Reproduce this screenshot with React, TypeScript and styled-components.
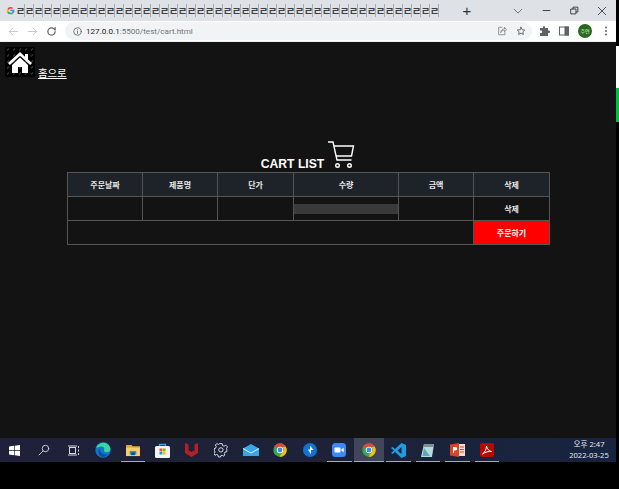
import React from "react";
import styled, { createGlobalStyle } from "styled-components";

const Global = createGlobalStyle`
  html, body { margin: 0; padding: 0; background: #000; overflow: hidden; }
  * { box-sizing: border-box; }
`;
const Screen = styled.div`
  position: relative; width: 619px; height: 489px; display: flex; flex-direction: column;
  background: #000; font-family: "Noto Sans CJK KR", "Noto Sans", sans-serif; overflow: hidden;
`;
const Window = styled.div`width: 616px; height: 42px; display: flex; flex-direction: column; flex: none;`;
const TabStrip = styled.div`
  height: 21px; background: #dee1e6; display: flex; align-items: center; padding-left: 6px; color: #3c4043;
`;
const Favicon = styled.svg`width: 9px; height: 9px; flex: none; margin-right: 1px;`;
const MiniTab = styled.span`
  width: 9px; height: 13px; flex: none; border-right: 1px solid #a9abb0;
  font-size: 10px; font-weight: 700; line-height: 13px; text-align: center; overflow: hidden;
`;
const NewTab = styled.span`
  margin-left: 23px; width: 10px; font: 400 15px/15px "Liberation Sans", sans-serif; color: #303235; text-align: center;
`;
const WinControls = styled.div`margin-left: auto; display: flex; align-items: center; gap: 0; padding-right: 0;`;
const WinBtn = styled.span`width: 28px; height: 16px; display: flex; align-items: center; justify-content: center;`;
const Toolbar = styled.div`
  height: 21px; background: #fff; display: flex; align-items: center; padding: 0 6px 0 8px; border-bottom: 1px solid #f1f1f1; color: #5f6368;
`;
const NavBtn = styled.span<{ $w?: number }>`
  width: ${(p) => p.$w ?? 19}px; display: flex; align-items: center; flex: none;
`;
const Omnibox = styled.div`
  margin-left: 5px; width: 467px; height: 18px; background: #f1f3f4; border-radius: 9px; display: flex; align-items: center; padding: 0 6px 0 8px; flex: none;
`;
const UrlText = styled.span`
  margin-left: 4px; font: 400 8.1px/12px "Roboto", "Liberation Sans", sans-serif; color: #70757a; letter-spacing: 0;
  b { font-weight: 400; color: #202124; }
`;
const OmniIcons = styled.span`margin-left: auto; display: flex; gap: 9px; align-items: center;`;
const ToolIcons = styled.span`margin-left: 8px; display: flex; align-items: center; gap: 9px;`;
const Avatar = styled.span`
  width: 14px; height: 14px; border-radius: 50%; background: #256b1c; color: #e6f2e0; font-size: 5px; line-height: 14px; text-align: center;
`;
const Page = styled.main`
  width: 616px; height: 396px; flex: none; background: #131313; color: #fff; display: flex; flex-direction: column; padding-top: 5px;
`;
const HomeLink = styled.a`
  display: flex; align-items: flex-end; padding-left: 5px; color: #fff; height: 32px;
  svg { align-self: flex-start; }
`;
const HomeLabel = styled.span`
  margin-left: 3px; font-size: 10.4px; line-height: 12px; text-decoration: underline;
`;
const Heading = styled.h1`
  margin: 62px 0 3px; height: 28px; display: flex; justify-content: center; align-items: flex-end; gap: 3px;
  font: 700 12.2px/16px "Liberation Sans", Arial, sans-serif; color: #fff;
`;
const HeadingText = styled.span`margin-bottom: -3px;`;
const Table = styled.table`
  margin-left: 67px; width: 482px; border-collapse: collapse; table-layout: fixed; color: #e8e8e8;
  font-size: 8px; font-weight: 700;
`;
const Head = styled.th`
  height: 24px; padding: 0; border: 1px solid #555; background: #1e232a; text-align: center; font-weight: 700;
`;
const Cell = styled.td`
  height: 24px; padding: 0; border: 1px solid #555; text-align: center;
`;
const QtyBar = styled.div`width: 100%; height: 10px; background: #3a3a3a;`;
const OrderCell = styled(Cell)`background: #ff0000; color: #fff;`;
const Taskbar = styled.footer`
  width: 616px; height: 24px; flex: none; background: linear-gradient(90deg, #1e2139 0%, #1d2238 55%, #172440 100%);
  display: flex; color: #e6e8ee;
`;
const TaskItem = styled.span<{ $running?: boolean; $active?: boolean }>`
  position: relative; width: 29.5px; height: 24px; flex: none; display: flex; align-items: center; justify-content: center;
  background: ${(p) => (p.$active ? "#41465a" : "transparent")};
  &::after {
    content: ""; display: ${(p) => (p.$running ? "block" : "none")};
    position: absolute; bottom: 0; left: ${(p) => (p.$active ? 0 : 2.5)}px; right: ${(p) => (p.$active ? 0 : 2.5)}px; height: 1px; background: #76b9ed;
  }
`;
const Clock = styled.div`
  margin-left: auto; width: 50px; padding: 1px 4px 0 0; text-align: center; font: 400 7.6px/11px "Noto Sans", "Noto Sans CJK KR", sans-serif; color: #e4e6ea;
`;
const ScrollMark = styled.div`
  position: absolute; left: 616px; top: 46px; width: 3px; height: 76px;
  background: linear-gradient(#fff 0 42px, #00c13c 42px);
`;

const GIcon = () => (
  <Favicon viewBox="0 0 24 24">
    <path d="M4 7a10 10 0 0 1 15-2l-3 3a6 6 0 0 0-9 3z" fill="#ea4335" />
    <path d="M3 17a11 11 0 0 1 0-10l4 3a6 6 0 0 0 0 4z" fill="#fbbc05" />
    <path d="M3 17l4-3a6 6 0 0 0 9 3l3 3a11 11 0 0 1-16-3z" fill="#34a853" />
    <path d="M12 10h10.500a11 11 0 0 1-3.500 10l-3-3a5 5 0 0 0 2-3h-6z" fill="#4285f4" />
  </Favicon>
);
const Ico = ({ children, w = 12, vb = "0 0 24 24", c = "currentColor", sw = 2 }: { children: React.ReactNode; w?: number; vb?: string; c?: string; sw?: number }) => (
  <svg width={w} height={w} viewBox={vb} fill="none" stroke={c} strokeWidth={sw} strokeLinecap="round" strokeLinejoin="round">{children}</svg>
);

const HomeIcon = () => (
  <svg width="30" height="30" viewBox="0 0 30 30">
    <rect width="30" height="30" fill="#000" />
    {[2, 8, 14, 20, 26].flatMap((x) => [2, 8, 14, 20, 26].map((y) => (
      <path key={`${x}-${y}`} d={`M${x} ${y + 1.500}l2 -2`} stroke="#3c3c3c" strokeWidth="1.100" />
    )))}
    <path d="M15 5L3 16l1.800 2L15 8.800 25.200 18l1.800-2-4-3.600V7h-3v2.700z" fill="#fff" />
    <path d="M15 10.500L7 18v8h6v-6h4v6h6v-8z" fill="#fff" />
  </svg>
);

const CartIcon = () => (
  <svg width="28" height="28" viewBox="0 0 28 28" fill="none" stroke="#fff" strokeWidth="1.400">
    <path d="M1 1h5l4 18h14.500" />
    <path d="M7 5h19.500l-2 10H9" />
    <circle cx="10.500" cy="24.500" r="1.800" />
    <circle cx="22.500" cy="24.500" r="1.800" />
  </svg>
);

const ChromeLogo = ({ s = 14 }: { s?: number }) => (
  <svg width={s} height={s} viewBox="0 0 24 24">
    <circle cx="12" cy="12" r="11.500" fill="#34a853" />
    <path d="M12 .5A11.500 11.500 0 0 1 22 6.500H12a5.500 5.500 0 0 0-5 3L2.500 5.500A11.500 11.500 0 0 1 12 .5z" fill="#ea4335" />
    <path d="M22 6.500A11.500 11.500 0 0 1 11 23.500l5.500-8A5.500 5.500 0 0 0 16 7z" fill="#fbbc05" />
    <circle cx="12" cy="12" r="5.500" fill="#fff" />
    <circle cx="12" cy="12" r="4.200" fill="#4285f4" />
  </svg>
);

const taskIcons: { key: string; running?: boolean; active?: boolean; icon: React.ReactNode }[] = [
  { key: "win", icon: <svg width="11" height="11" viewBox="0 0 11 11"><path d="M0 1.500l5-.7v4.300H0zM5.700.7L11 0v5.100H5.700zM0 5.800h5v4.400l-5-.7zM5.700 5.800H11V11l-5.300-.7z" fill="#fff" /></svg> },
  { key: "search", icon: <Ico w={12} c="#d5d7de" sw={1.800}><circle cx="15" cy="9" r="6.500" /><path d="M10 14l-8 8" /></Ico> },
  { key: "view", icon: <svg width="12" height="11" viewBox="0 0 12 11" fill="none" stroke="#d5d7de"><rect x="1.500" y="2.500" width="6" height="6" /><path d="M0 1h9M0 10h9M10.500 1v2M10.500 4.500v2M10.500 8v2" /></svg> },
  { key: "edge", icon: <svg width="16" height="16" viewBox="0 0 24 24"><circle cx="12" cy="12" r="11.500" fill="#0f78c8" /><path d="M2 8C5 1 15-1 20 4c4 4 4 10 0 11-4 1-8 0-6-4 1-2-2-5-6-4-3 .8-5 2-6 1z" fill="#38d6a0" /><path d="M10 22c-5-2-6-9-3-12 0 5 4 10 12 8-2 3-5 5-9 4z" fill="#0a4f9c" /></svg> },
  { key: "files", running: true, icon: <svg width="14" height="13" viewBox="0 0 15 14"><path d="M0 1h6l1 1.500h8V13H0z" fill="#e0a93a" /><rect y="4" width="15" height="9" fill="#f3cf6e" /><rect x="4" y="7.500" width="7" height="4" fill="#2b90d9" /><rect x="5.500" y="9" width="4" height="3" fill="#16507f" /></svg> },
  { key: "store", icon: <svg width="15" height="15" viewBox="0 0 15 15"><path d="M4.500 3V1.500h6V3" fill="none" stroke="#38a9e4" strokeWidth="1.300" /><rect y="3" width="15" height="12" rx="1.500" fill="#f3f3f3" /><rect x="4.500" y="5.500" width="2.800" height="2.800" fill="#f25022" /><rect x="7.700" y="5.500" width="2.800" height="2.800" fill="#7fba00" /><rect x="4.500" y="8.700" width="2.800" height="2.800" fill="#00a4ef" /><rect x="7.700" y="8.700" width="2.800" height="2.800" fill="#ffb900" /></svg> },
  { key: "mcafee", icon: <svg width="13" height="14" viewBox="0 0 13 14"><path d="M0 0l3.500 1.500v6L6.500 9l3-1.500v-6L13 0v10l-6.500 4L0 10z" fill="#b3202a" /></svg> },
  { key: "settings", icon: <svg width="15" height="15" viewBox="0 0 24 24" fill="none" stroke="#d8dae0" strokeWidth="1.600"><circle cx="11" cy="11" r="3.500" /><path d="M9 1h4l.6 3 2.600 1.100 2.600-1.700 2.800 2.800-1.700 2.600L20.700 11l-.4 3-2.800.6-1.100 2.600 1 2-2 1.600-2.400-1-1.900.4-.6 2.200H7l-.6-3-2.600-1.100-2.300 1.500L0 17l1.600-2.500L.8 12 0 9l2.500-.6L3.600 5.800 2 3.200 4.800 1l2.600 1.400z" /></svg> },
  { key: "mail", icon: <svg width="16" height="12" viewBox="0 0 16 12"><path d="M0 4.500L8 0l8 4.500V12H0z" fill="#3aa6ea" /><path d="M0 4.500l8 4.500 8-4.500" fill="none" stroke="#d9f0fc" strokeWidth="1" /></svg> },
  { key: "chrome", icon: <ChromeLogo /> },
  { key: "pointer", icon: <svg width="14" height="14" viewBox="0 0 14 14"><circle cx="7" cy="7" r="7" fill="#0f74d4" /><path d="M7 2.500L10.500 7H8v4.500L5 6.500h2z" fill="#fff" /></svg> },
  { key: "zoom", running: true, icon: <svg width="14" height="14" viewBox="0 0 14 14"><rect width="14" height="14" rx="3.500" fill="#3f8af2" /><rect x="2.500" y="4.500" width="6" height="5" rx="1" fill="#fff" /><path d="M9.300 6.500l2.400-1.700v4.400L9.300 7.500z" fill="#fff" /></svg> },
  { key: "chrome2", running: true, active: true, icon: <ChromeLogo /> },
  { key: "vscode", running: true, icon: <svg width="15" height="15" viewBox="0 0 15 15"><path d="M10.500 0L15 2v11l-4.500 2L4 9l-2.500 2L0 10l2.800-2.500L0 5l1.500-1L4 6zM10.500 4L6.500 7.500l4 3.500z" fill="#1f9ce4" /></svg> },
  { key: "note", running: true, icon: <svg width="14" height="15" viewBox="0 0 14 15"><path d="M3 1h10l-2 13H0z" fill="#b8dbe0" /><path d="M3 1h10l-.6 3H2.300z" fill="#7f8f98" /><path d="M3 5l6 8H1.500z" fill="#5fa8b8" /></svg> },
  { key: "ppt", running: true, icon: <svg width="15" height="14" viewBox="0 0 15 14"><rect x="5" y="1" width="10" height="12" fill="#f4ded8" /><path d="M0 1.500L9 0v14L0 12.500z" fill="#d24726" /><rect x="10" y="3.500" width="4" height="1" fill="#d24726" /><rect x="10" y="6" width="4" height="1" fill="#d24726" /><rect x="10" y="8.500" width="4" height="1" fill="#d24726" /><path d="M3 4h2.500a1.500 1.500 0 0 1 0 3.500H4V10H3z" fill="#fff" /></svg> },
  { key: "acrobat", running: true, icon: <svg width="14" height="14" viewBox="0 0 14 14"><rect width="14" height="14" rx="2" fill="#b30b00" /><path d="M2.500 11c2-1 4-5 4-8 .5 3 2.500 5 5 5.500-3-.3-6 .5-9 2.500z" fill="none" stroke="#fff" strokeWidth="1" /></svg> },
];

const headers = ["주문날짜", "제품명", "단가", "수량", "금액", "삭제"];
const colWidths = [75, 75, 76, 105, 75, 76];

export default function App() {
  return (
    <Screen>
      <Global />
      <Window>
        <TabStrip>
          <GIcon />
          {Array.from({ length: 47 }, (_, i) => <MiniTab key={i}>ㄹ</MiniTab>)}
          <NewTab>+</NewTab>
          <WinControls>
            <WinBtn><Ico w={10} c="#5f6368" sw={2}><path d="M3 8l9 9 9-9" /></Ico></WinBtn>
            <WinBtn><Ico w={9} c="#333" sw={2.400}><path d="M3 12h18" /></Ico></WinBtn>
            <WinBtn><Ico w={9} c="#333" sw={2.400}><path d="M3 8h13v13H3zM8 8V3h13v13h-5" /></Ico></WinBtn>
            <WinBtn><Ico w={10} c="#333" sw={2}><path d="M3 3l18 18M21 3L3 21" /></Ico></WinBtn>
          </WinControls>
        </TabStrip>
        <Toolbar>
          <NavBtn><Ico w={11} c="#c0c3c7"><path d="M21 12H3M10 5l-7 7 7 7" /></Ico></NavBtn>
          <NavBtn><Ico w={11} c="#c0c3c7"><path d="M3 12h18M14 5l7 7-7 7" /></Ico></NavBtn>
          <NavBtn $w={14}><Ico w={11} c="#5f6368" sw={2.500}><path d="M20 12a8 8 0 1 1-2.500-5.800L20 9V3" /></Ico></NavBtn>
          <Omnibox>
            <Ico w={9} c="#5f6368" sw={2.200}><circle cx="12" cy="12" r="10" /><path d="M12 11v6M12 7v.5" /></Ico>
            <UrlText><b>127.0.0.1</b>:5500/test/cart.html</UrlText>
            <OmniIcons>
              <Ico w={10} c="#80868b"><path d="M12 3h-8v18h15v-6M9 15c0-5 4-8 9-8V3l5 6-5 5v-4c-4 0-7 2-9 5z" /></Ico>
              <Ico w={10} c="#5f6368" sw={2.200}><path d="M12 3l2.800 6 6.200.7-4.600 4.300 1.300 6.500L12 17l-5.700 3.500 1.300-6.500L3 9.700 9.200 9z" /></Ico>
            </OmniIcons>
          </Omnibox>
          <ToolIcons>
            <svg width="10" height="10" viewBox="0 0 10 10"><path d="M0 2h3V1a1 1 0 0 1 2 0v1h3v2.500h1a1.200 1.200 0 0 1 0 2.500H8v3H0V7h1a1.200 1.200 0 0 0 0-2.500H0z" fill="#5f6368" /></svg>
            <svg width="10" height="10" viewBox="0 0 10 10" fill="none" stroke="#5f6368"><rect x=".5" y="1" width="9" height="8" /><rect x="6" y="1" width="3.500" height="8" fill="#5f6368" /></svg>
            <Avatar>주연</Avatar>
            <svg width="10" height="10" viewBox="0 0 10 10"><circle cx="5" cy="1.500" r="1" fill="#5f6368" /><circle cx="5" cy="5" r="1" fill="#5f6368" /><circle cx="5" cy="8.500" r="1" fill="#5f6368" /></svg>
          </ToolIcons>
        </Toolbar>
      </Window>
      <Page>
        <HomeLink>
          <HomeIcon />
          <HomeLabel>홈으로</HomeLabel>
        </HomeLink>
        <Heading>
          <HeadingText>CART LIST</HeadingText>
          <CartIcon />
        </Heading>
        <Table>
          <colgroup>{colWidths.map((w, i) => <col key={i} style={{ width: w }} />)}</colgroup>
          <thead>
            <tr>{headers.map((h) => <Head key={h}>{h}</Head>)}</tr>
          </thead>
          <tbody>
            <tr>
              <Cell /><Cell /><Cell />
              <Cell><QtyBar /></Cell>
              <Cell />
              <Cell>삭제</Cell>
            </tr>
            <tr>
              <Cell colSpan={5} />
              <OrderCell>주문하기</OrderCell>
            </tr>
          </tbody>
        </Table>
      </Page>
      <Taskbar>
        {taskIcons.map((t) => (
          <TaskItem key={t.key} $running={t.running} $active={t.active}>{t.icon}</TaskItem>
        ))}
        <Clock>오후 2:47<br />2022-03-25</Clock>
      </Taskbar>
      <ScrollMark />
    </Screen>
  );
}
